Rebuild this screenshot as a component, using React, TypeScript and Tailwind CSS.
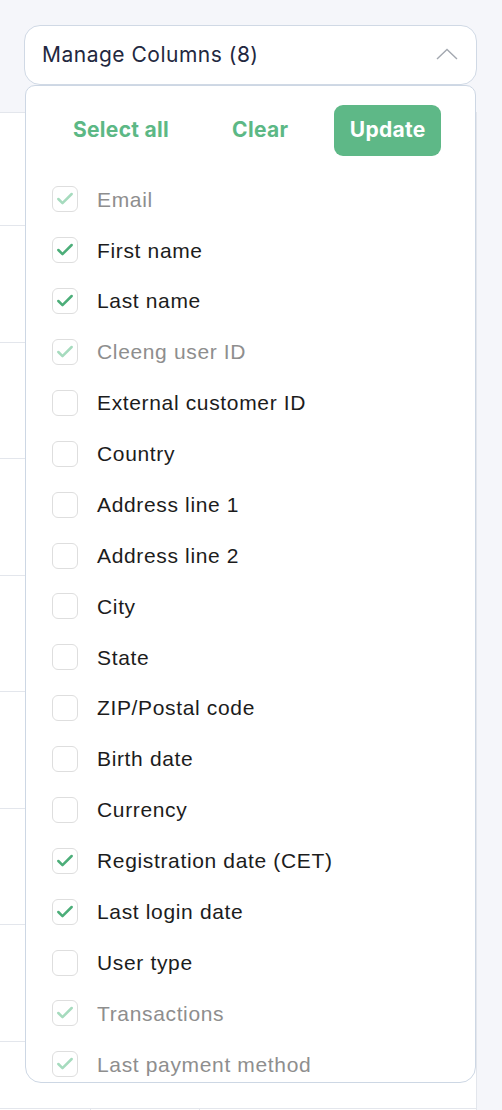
import { Check } from 'lucide-react';

const columns = [
  { label: 'Email', checked: true, disabled: true },
  { label: 'First name', checked: true },
  { label: 'Last name', checked: true },
  { label: 'Cleeng user ID', checked: true, disabled: true },
  { label: 'External customer ID' },
  { label: 'Country' },
  { label: 'Address line 1' },
  { label: 'Address line 2' },
  { label: 'City' },
  { label: 'State' },
  { label: 'ZIP/Postal code' },
  { label: 'Birth date' },
  { label: 'Currency' },
  { label: 'Registration date (CET)', checked: true },
  { label: 'Last login date', checked: true },
  { label: 'User type' },
  { label: 'Transactions', checked: true, disabled: true },
  { label: 'Last payment method', checked: true, disabled: true },
];

const ColumnOption = ({ label, checked = false, disabled = false }: { label: string; checked?: boolean; disabled?: boolean }) => (
  <div className="h-[50.88px] flex items-center">
    <div className="w-[26px] h-[26px] rounded-[6px] border border-[#dedede] bg-white flex items-center justify-center flex-shrink-0">
      {checked && (
        <Check
          className={`w-[20px] h-[20px] ${disabled ? 'text-[#a6dbbe]' : 'text-[#4cae79]'}`}
          strokeWidth={3}
        />
      )}
    </div>
    <span
      className={`ml-[19px] text-[21px] tracking-[0.65px] ${disabled ? 'text-[#8e8e8e]' : 'text-[#1c1c1c]'}`}
      style={{ fontFamily: '"Liberation Sans", Arial, sans-serif' }}
    >
      {label}
    </span>
  </div>
);

export default function App() {
  return (
    <div
      className="relative h-[1110px] overflow-hidden bg-[#f5f6fa]"
      style={{ fontFamily: 'Inter, "Noto Sans", sans-serif' }}
    >
      {/* Manage columns trigger */}
      <div className="pt-[25px] pl-[24px] w-[477px]">
        <button className="w-full h-[60px] bg-white border border-[#d0d9e5] rounded-[16px] flex items-center justify-between pl-[17px] pr-[18px]">
          <span className="text-[21px] text-[#232840] tracking-[0.5px]">Manage Columns (8)</span>
          <svg width="22" height="12" viewBox="0 0 22 12" fill="none" className="mb-[2px]">
            <polyline points="1,11 11,1.5 21,11" stroke="#a3a8b0" strokeWidth="1.4" />
          </svg>
        </button>
      </div>

      {/* Table behind the dropdown */}
      <div className="mt-[27px] w-[477px] bg-white border-t border-r border-[#e3e6ec]">
        <div className="h-[113px] border-b border-[#e3e6ec]"></div>
        {[0, 1, 2, 3, 4, 5, 6].map((i) => (
          <div key={i} className="h-[116.5px] border-b border-[#e3e6ec]"></div>
        ))}
        <div className="h-[67px] border-b border-[#e3e6ec]"></div>
        <div className="flex h-[40px]">
          <div className="w-[91px] border-r border-[#e3e6ec]"></div>
          <div className="w-[109px] border-r border-[#e3e6ec] pl-[26px]">
            <span className="block text-[30px] font-extrabold text-[#1b2a6b] leading-none pt-[1px]">EM</span>
          </div>
        </div>
      </div>

      {/* Dropdown panel */}
      <div className="absolute top-[85px] left-[25px] w-[451px] h-[998px] bg-white border border-[#cdd7e4] rounded-t-[10px] rounded-b-[16px]">
        <div className="flex items-center h-[87px] pt-[1px]">
          <button className="ml-[47px] text-[21px] font-bold tracking-[0.3px] text-[#5cb885]">Select all</button>
          <button className="ml-[63px] text-[21px] font-bold tracking-[0.3px] text-[#5cb885]">Clear</button>
          <button className="ml-[46px] w-[107px] h-[51px] rounded-[9px] bg-[#5eb887] text-white text-[21px] font-bold tracking-[0.3px]">
            Update
          </button>
        </div>
        <div className="pl-[26px] pt-[1px]">
          {columns.map((c) => (
            <ColumnOption key={c.label} label={c.label} checked={c.checked} disabled={c.disabled} />
          ))}
        </div>
      </div>
    </div>
  );
}
